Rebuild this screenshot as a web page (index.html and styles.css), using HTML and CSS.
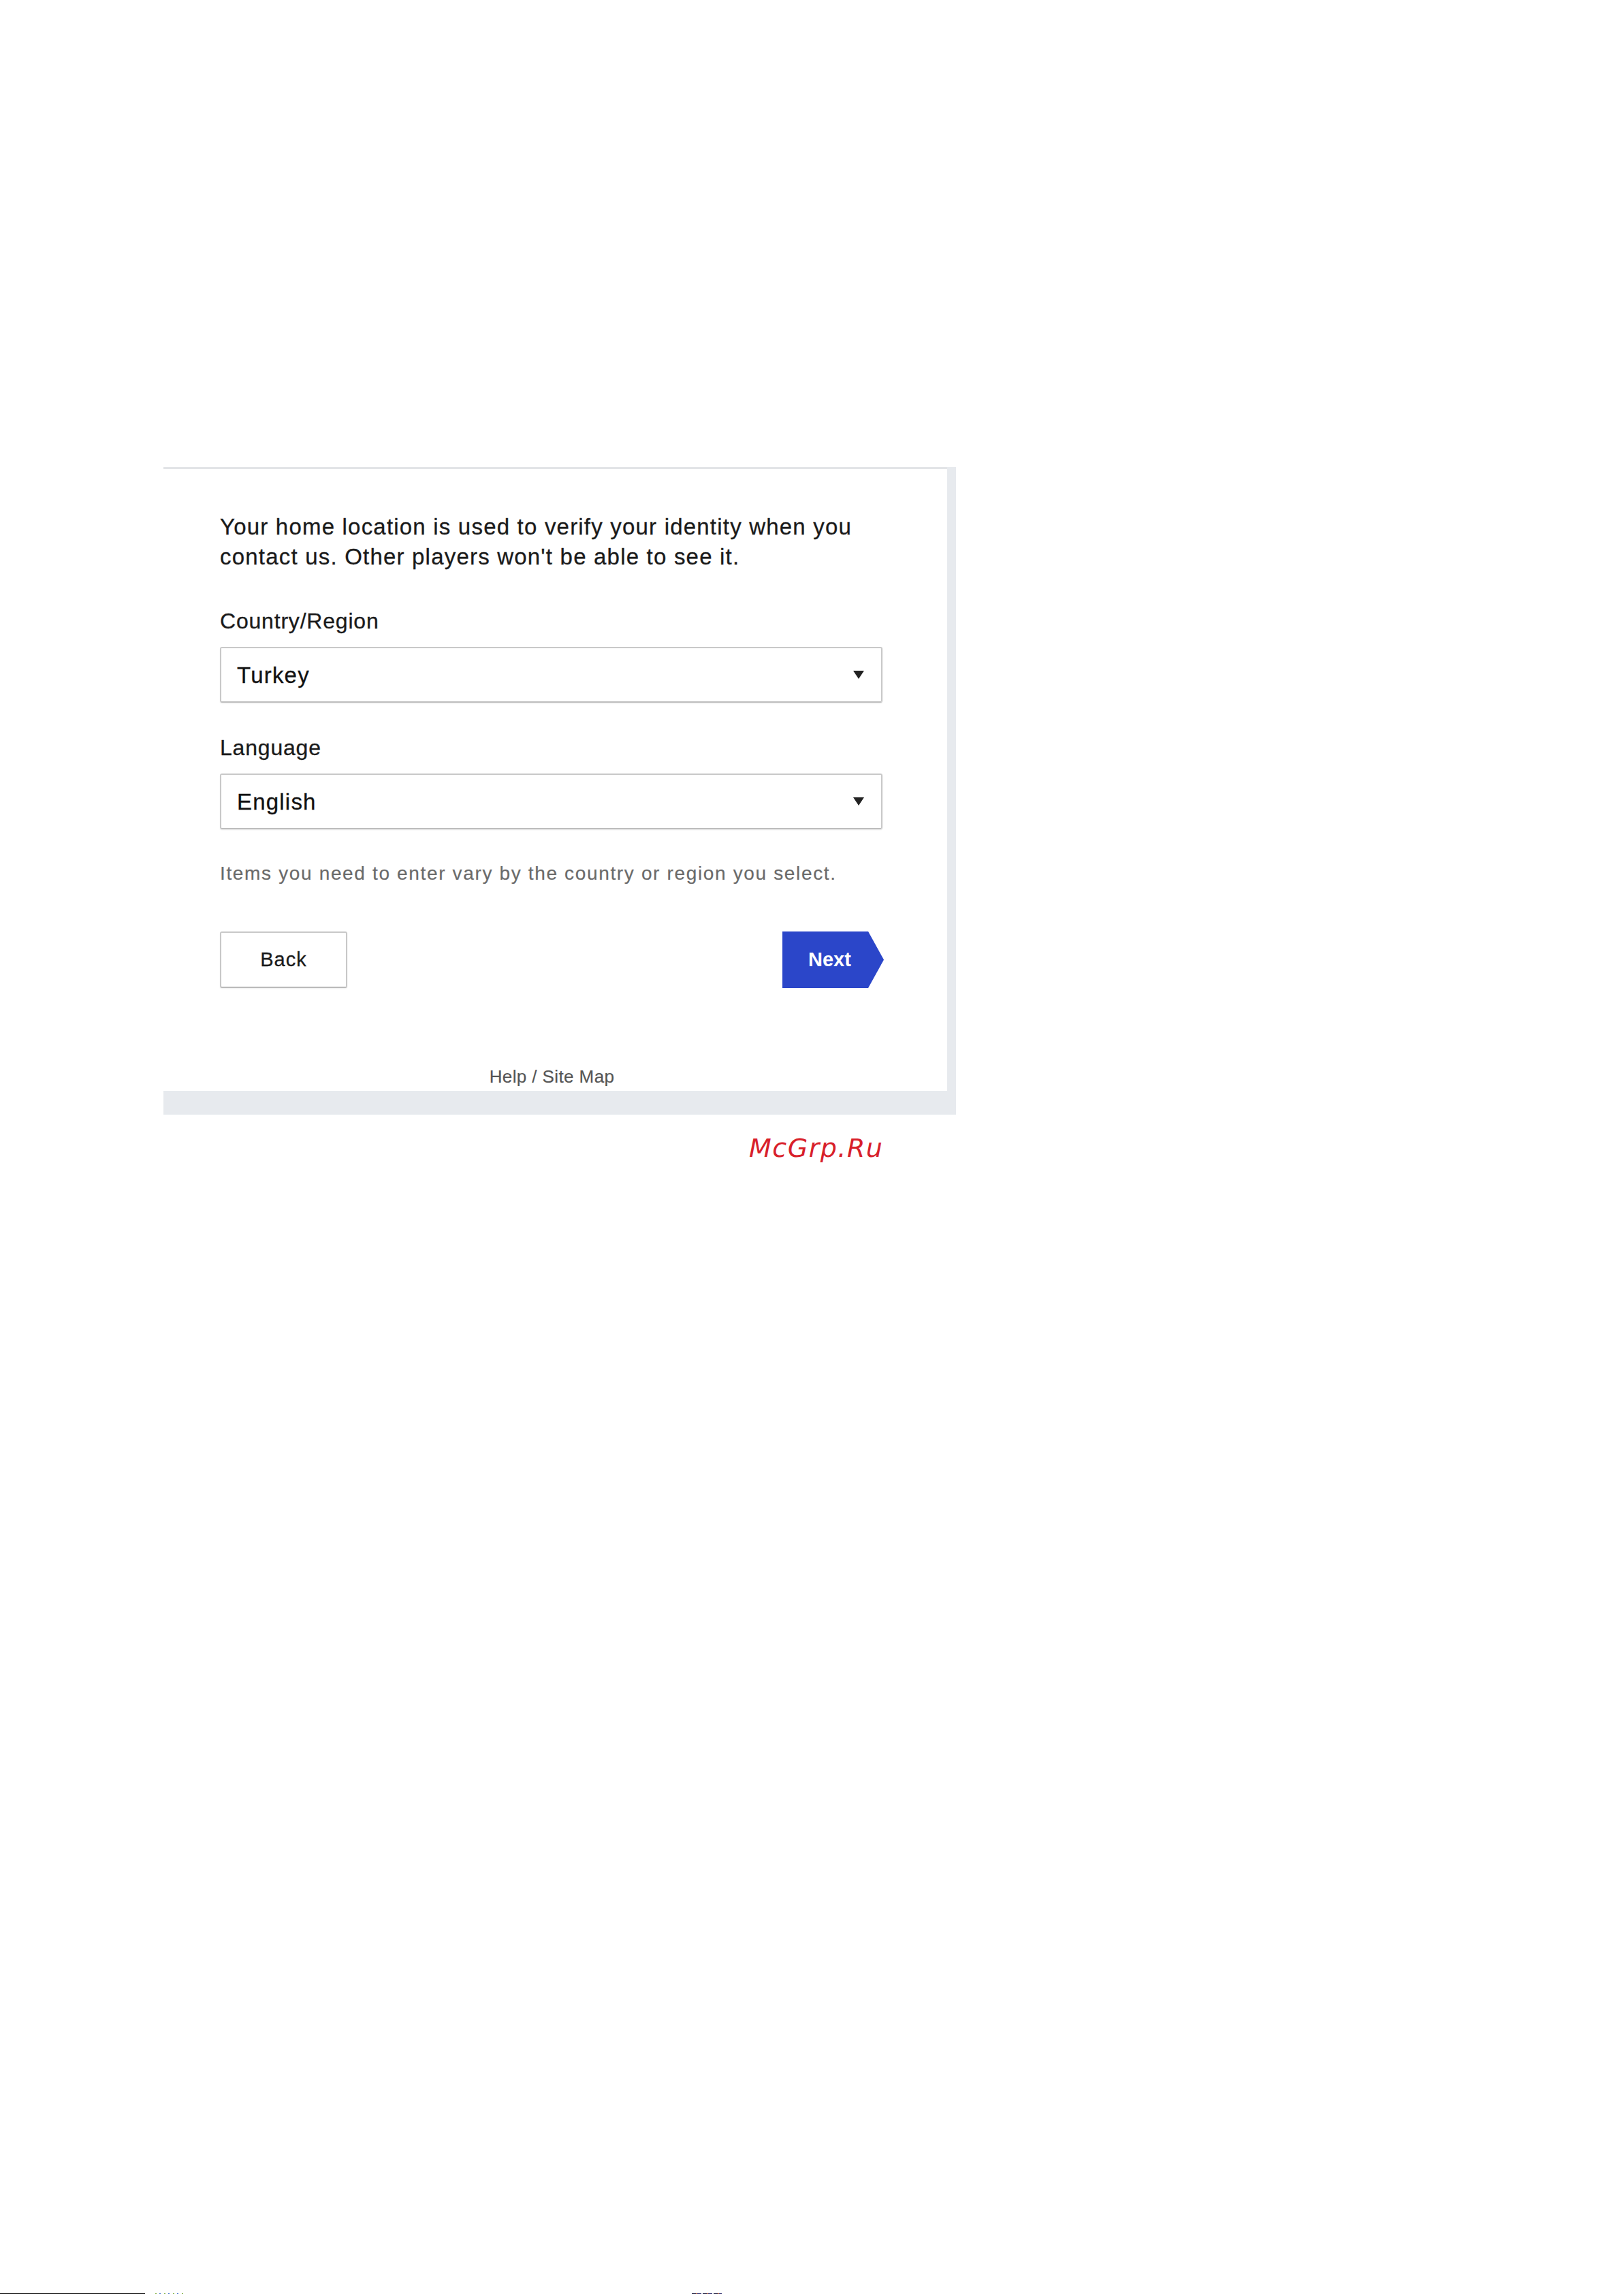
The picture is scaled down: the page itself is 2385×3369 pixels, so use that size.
FILE: index.html
```html
<!DOCTYPE html>
<html lang="en">
<head>
<meta charset="utf-8">
<title>Home location</title>
<link rel="stylesheet" href="styles.css">
</head>
<body>
<main class="page">
  <section class="frame">
    <div class="card">
      <p class="intro">Your home location is used to verify your identity when you<br>contact us. Other players won't be able to see it.</p>

      <label class="label label-first">Country/Region</label>
      <div class="select">
        <span class="select-value">Turkey</span>
        <svg class="caret" width="16" height="12" viewBox="0 0 16 12"><polygon points="0,0 16,0 8,12" fill="#222"/></svg>
      </div>

      <label class="label">Language</label>
      <div class="select">
        <span class="select-value">English</span>
        <svg class="caret" width="16" height="12" viewBox="0 0 16 12"><polygon points="0,0 16,0 8,12" fill="#222"/></svg>
      </div>

      <p class="hint">Items you need to enter vary by the country or region you select.</p>

      <div class="actions">
        <button class="btn-back">Back</button>
        <button class="btn-next">Next</button>
      </div>

      <p class="footer-links">Help / Site Map</p>
    </div>
  </section>

  <div class="watermark">McGrp.Ru</div>

  <div class="scan-edge">
    <span class="scan-rule"></span>
    <span class="scan-dots"></span>
    <span class="scan-dots2"></span>
  </div>
</main>
</body>
</html>
```

FILE: styles.css
```css
html, body {
  margin: 0;
  padding: 0;
  background: #ffffff;
}

.page {
  height: 3369px;
  display: flex;
  flex-direction: column;
  align-items: flex-start;
  padding-top: 686px;
  box-sizing: border-box;
  font-family: "Liberation Sans", Arial, sans-serif;
  color: #1f1f1f;
}

.frame {
  margin-left: 240px;
  width: 1164px;
  background: #e7eaee;
  padding: 0 13px 35px 0;
  box-sizing: border-box;
}

.card {
  background: #ffffff;
  border-top: 3px solid #e2e4e7;
  padding: 63px 93px 6px 83px;
  display: flex;
  flex-direction: column;
  align-items: flex-start;
}

.intro {
  margin: 0;
  font-size: 33px;
  line-height: 44px;
  letter-spacing: 1.2px;
  color: #1a1a1a;
  -webkit-text-stroke: 0.3px #1a1a1a;
}

.label {
  display: block;
  margin-top: 48px;
  font-size: 32px;
  line-height: 36px;
  letter-spacing: 0.8px;
  color: #1a1a1a;
  -webkit-text-stroke: 0.3px #1a1a1a;
}

.label-first {
  margin-top: 54px;
}

.select {
  margin-top: 20px;
  width: 973px;
  height: 82px;
  box-sizing: border-box;
  border: 2px solid #c9c9c9;
  border-bottom-color: #bdbdbd;
  border-radius: 3px;
  box-shadow: 0 1px 2px rgba(0,0,0,0.08);
  padding: 2px 25px 0 23px;
  display: flex;
  align-items: flex-start;
  justify-content: space-between;
}

.select-value {
  font-size: 33px;
  line-height: 76px;
  letter-spacing: 1.2px;
  color: #111111;
  -webkit-text-stroke: 0.3px #111111;
}

.caret {
  align-self: center;
  margin-top: -2px;
}

.hint {
  margin: 48px 0 0 0;
  font-size: 28px;
  line-height: 34px;
  letter-spacing: 1.65px;
  color: #6a6a6a;
  -webkit-text-stroke: 0.2px #6a6a6a;
}

.actions {
  margin-top: 68px;
  width: 975px;
  display: flex;
  justify-content: space-between;
}

.btn-back {
  width: 187px;
  height: 83px;
  box-sizing: border-box;
  border: 2px solid #c8c8c8;
  border-bottom-color: #b9b9b9;
  border-radius: 3px;
  background: #ffffff;
  box-shadow: 0 1px 2px rgba(0,0,0,0.08);
  font-family: "Liberation Sans", Arial, sans-serif;
  font-size: 29px;
  line-height: 79px;
  letter-spacing: 1px;
  color: #1a1a1a;
  -webkit-text-stroke: 0.3px #1a1a1a;
  padding: 0;
}

.btn-next {
  width: 149px;
  height: 83px;
  border: 0;
  padding: 0 0 0 38px;
  text-align: left;
  background: #2b46c9;
  clip-path: polygon(0 0, 84.6% 0, 100% 50%, 84.6% 100%, 0 100%);
  font-family: "Liberation Sans", Arial, sans-serif;
  font-weight: bold;
  font-size: 29px;
  line-height: 83px;
  color: #ffffff;
}

.footer-links {
  margin: 115px 0 0 0;
  width: 975px;
  text-align: center;
  font-size: 26px;
  line-height: 30px;
  letter-spacing: 0.4px;
  color: #555555;
  -webkit-text-stroke: 0.2px #555555;
}

.watermark {
  margin-top: 27px;
  margin-left: 1100px;
  font-family: "DejaVu Sans", sans-serif;
  font-style: oblique;
  font-size: 38px;
  line-height: 44px;
  letter-spacing: 1.5px;
  color: #d8202a;
}

.scan-edge {
  margin-top: auto;
  width: 100%;
  height: 1px;
  display: flex;
  align-items: flex-end;
}

.scan-rule {
  width: 213px;
  height: 1px;
  background: #000000;
}

.scan-dots {
  margin-left: 15px;
  width: 42px;
  height: 1px;
  background: repeating-linear-gradient(90deg, #7a3 0 2px, transparent 2px 6px, #36c 6px 8px, transparent 8px 13px);
}

.scan-dots2 {
  margin-left: 746px;
  width: 44px;
  height: 1px;
  background: repeating-linear-gradient(90deg, #113 0 6px, #a42 6px 8px, #226 8px 14px, transparent 14px 16px);
}
```
